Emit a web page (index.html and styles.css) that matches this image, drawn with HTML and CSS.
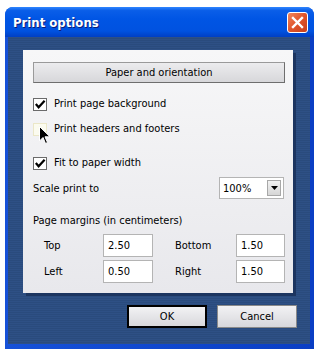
FILE: index.html
```html
<!DOCTYPE html>
<html lang="en">

<head>
    <meta charset="UTF-8">
    <meta name="viewport" content="width=device-width, initial-scale=1.0">
    <title>Print options</title>
    <link rel="stylesheet" href="styles.css">
</head>

<body>
    <div class="window">
        <div class="titlebar">
            <span class="title">Print options</span>
            <div class="close">
                <svg width="13" height="13" viewBox="0 0 13 13">
                    <path d="M2 2 L11 11 M11 2 L2 11" stroke="#fff" stroke-width="2.4" stroke-linecap="square" />
                </svg>
            </div>
        </div>
        <div class="frame">
            <div class="client">
                <div class="panel">
                    <button class="wide-btn">Paper and orientation</button>

                    <div class="check-row first">
                        <span class="box checked">
                            <svg width="13" height="13" viewBox="0 0 13 13"><path d="M2 6 L5 9.5 L11.5 2.5" stroke="#000" stroke-width="2.4" fill="none" /></svg>
                        </span>
                        <span>Print page background</span>
                    </div>
                    <div class="check-row second">
                        <span class="box hover"></span>
                        <span>Print headers and footers</span>
                        <svg class="cursor" width="12" height="19" viewBox="0 0 12 19">
                            <path d="M0.5 0.5 L0.5 15 L4 11.5 L6.5 17.5 L8.5 16.5 L6 10.8 L11 10.8 Z" fill="#000" stroke="#fff" stroke-width="1" />
                        </svg>
                    </div>
                    <div class="check-row third">
                        <span class="box checked">
                            <svg width="13" height="13" viewBox="0 0 13 13"><path d="M2 6 L5 9.5 L11.5 2.5" stroke="#000" stroke-width="2.4" fill="none" /></svg>
                        </span>
                        <span>Fit to paper width</span>
                    </div>

                    <div class="scale-row">
                        <span>Scale print to</span>
                        <div class="select">
                            <span>100%</span>
                            <span class="arrow">
                                <svg width="7" height="4" viewBox="0 0 7 4"><path d="M0 0 L7 0 L3.5 4 Z" fill="#000" /></svg>
                            </span>
                        </div>
                    </div>

                    <div class="margins-title">Page margins (in centimeters)</div>
                    <div class="margins">
                        <span class="lbl">Top</span>
                        <span class="field">2.50</span>
                        <span class="lbl">Bottom</span>
                        <span class="field">1.50</span>
                        <span class="lbl">Left</span>
                        <span class="field">0.50</span>
                        <span class="lbl">Right</span>
                        <span class="field">1.50</span>
                    </div>
                </div>
                <div class="actions">
                    <button class="btn default">OK</button>
                    <button class="btn">Cancel</button>
                </div>
            </div>
        </div>
    </div>
</body>

</html>
```

FILE: styles.css
```css
body {
    margin: 0;
    background: #fff;
    font-family: 'DejaVu Sans Condensed', 'DejaVu Sans', sans-serif;
    font-stretch: condensed;
    font-size: 11px;
    color: #000;
}

.window {
    margin: 7px 0 0 5px;
    width: 309px;
    height: 342px;
    border-radius: 8px 8px 0 0;
    overflow: hidden;
    background: #0a4fd8;
    display: flex;
    flex-direction: column;
}

.titlebar {
    height: 30px;
    flex: none;
    display: flex;
    align-items: center;
    justify-content: space-between;
    padding: 0 6px 0 8px;
    background: linear-gradient(#2f86ff 0%, #0a5ee8 12%, #0055e4 40%, #0052e0 80%, #003fc4 100%);
}

.title {
    color: #fff;
    font-family: 'DejaVu Sans Condensed', 'DejaVu Sans', sans-serif;
    font-stretch: condensed;
    font-size: 13px;
    font-weight: bold;
    text-shadow: 1px 1px 0 #0a1f7a;
}

.close {
    width: 19px;
    height: 19px;
    border: 1px solid #fff;
    border-radius: 3px;
    background: linear-gradient(135deg, #f0875e 0%, #e0542a 50%, #c8401c 100%);
    display: flex;
    align-items: center;
    justify-content: center;
    margin-top: 1px;
}

.frame {
    flex: 1;
    padding: 0 4px 5px 3px;
    background: linear-gradient(90deg, #1651d8, #0a3ec4);
    display: flex;
}

.client {
    flex: 1;
    padding: 13px 13px 0 15px;
    background: #2e5083 repeating-linear-gradient(#2e5085 0 1px, #2a4b7d 1px 2px);
}

.panel {
    width: 270px;
    height: 243px;
    box-sizing: border-box;
    padding: 12px 8px 0 10px;
    background: linear-gradient(#f7f7f8, #e8e8ec);
    box-shadow: 3px 3px 0 #1c3560;
    position: relative;
}

.wide-btn {
    display: block;
    width: 252px;
    height: 21px;
    margin: 0;
    padding: 0;
    font: inherit;
    color: #000;
    border: 1px solid #9a9a9a;
    border-right-color: #6e6e6e;
    border-bottom-color: #6e6e6e;
    background: linear-gradient(#ececee, #d7d7da);
}

.check-row {
    display: flex;
    align-items: center;
    gap: 7px;
    height: 14px;
    position: relative;
}

.check-row.first {
    margin-top: 13px;
}

.check-row.second {
    margin-top: 11px;
}

.check-row.third {
    margin-top: 20px;
}

.box {
    width: 14px;
    height: 13px;
    box-sizing: border-box;
    display: flex;
    align-items: center;
    justify-content: center;
    margin-top: 2px;
}

.box.checked {
    border: 1px solid #6b6b6b;
    background: #fff;
}

.box.hover {
    border: 1px solid #ebe7c8;
    background: #fbfbef;
}

.cursor {
    position: absolute;
    left: 6px;
    top: 5px;
}

.scale-row {
    display: flex;
    align-items: center;
    justify-content: space-between;
    margin-top: 8px;
    padding-right: 1px;
}

.select {
    width: 65px;
    height: 22px;
    box-sizing: border-box;
    border: 1px solid #b4b4b4;
    background: #fff;
    display: flex;
    align-items: center;
    justify-content: space-between;
    padding: 0 2px 0 3px;
}

.arrow {
    width: 14px;
    height: 16px;
    box-sizing: border-box;
    border: 1px solid #a8a8a8;
    background: linear-gradient(#f2f2f2, #d6d6d6);
    display: flex;
    align-items: center;
    justify-content: center;
}

.margins-title {
    margin-top: 15px;
}

.margins {
    display: grid;
    grid-template-columns: 59px 72px 61px 49px;
    row-gap: 3px;
    margin-top: 7px;
    padding-left: 11px;
    align-items: center;
}

.field {
    height: 23px;
    box-sizing: border-box;
    border: 1px solid #b4b4b4;
    background: #fff;
    padding: 0 4px;
    display: flex;
    align-items: center;
}

.margins .field:nth-child(2),
.margins .field:nth-child(6) {
    width: 50px;
}

.actions {
    display: flex;
    justify-content: flex-end;
    gap: 10px;
    margin-top: 12px;
}

.btn {
    width: 80px;
    height: 23px;
    margin: 0;
    padding: 0;
    font: inherit;
    color: #000;
    border: 1px solid #8a8a8a;
    background: linear-gradient(#f2f2f4, #d8d8dc);
}

.btn.default {
    border: 2px solid #000;
}
```
